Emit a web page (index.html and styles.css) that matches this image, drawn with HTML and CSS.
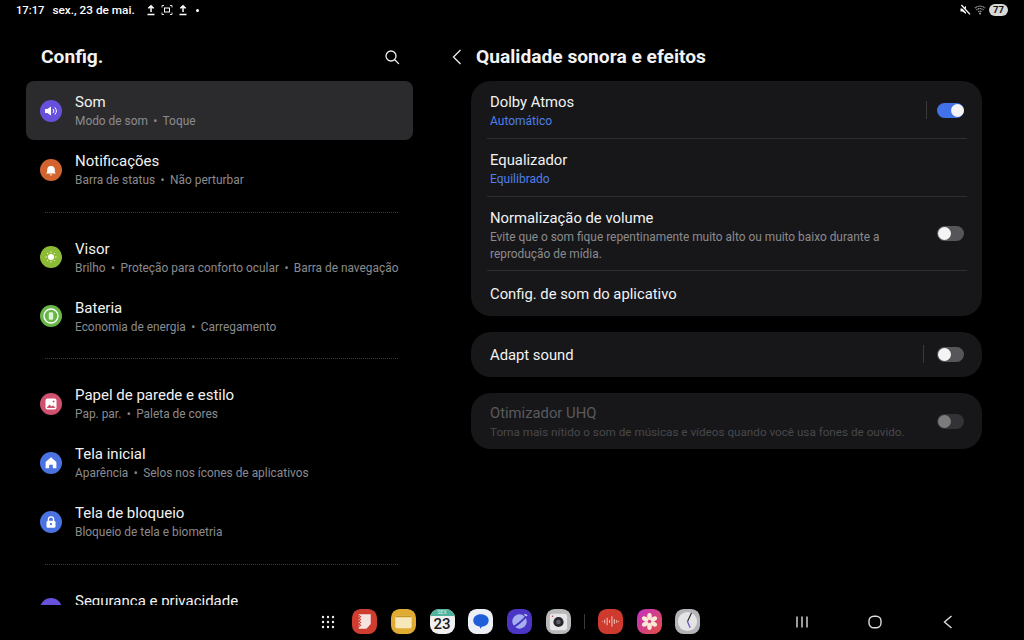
FILE: index.html
```html
<!DOCTYPE html>
<html lang="pt-BR">
  <head>
    <title>Config.</title>
    <meta charset="utf-8">
    <link rel="stylesheet" href="styles.css">
  </head>
  <body>

  <div class="statusbar">
    <span class="clock">17:17</span>
    <span class="date">sex., 23 de mai.</span>
    <svg class="st-icon first" viewBox="0 0 12 12"><path d="M6 8V2M3.400 4.400 6 1.800l2.600 2.600M2.500 10.600h7" fill="none" stroke="#fff" stroke-width="1.500"/></svg>
    <svg class="st-icon" viewBox="0 0 12 12"><path d="M1 3.500V1.500h2M9 1.500h2v2M11 8.500v2H9M3 10.500H1v-2" fill="none" stroke="#ddd" stroke-width="1"/><rect x="3.500" y="4" width="5" height="4" fill="none" stroke="#fff" stroke-width="1"/></svg>
    <svg class="st-icon" viewBox="0 0 12 12"><path d="M6 8V2M3.400 4.400 6 1.800l2.600 2.600M2.500 10.600h7" fill="none" stroke="#fff" stroke-width="1.500"/></svg>
    <span class="st-dot"></span>
    <span class="st-right">
      <svg class="st-icon" viewBox="0 0 12 12"><path d="M1.500 4.500h2L7 2v8L3.500 7.500h-2z" fill="#fff"/><path d="M2 1.500 10.500 10.500" stroke="#000" stroke-width="2.400"/><path d="M2.400 1 11 10.400" stroke="#fff" stroke-width="1.300"/></svg>
      <svg class="st-icon" viewBox="0 0 12 12"><path d="M.8 4.200a7.500 7.500 0 0 1 10.400 0M2.500 6a5 5 0 0 1 7 0M4.200 7.800a2.600 2.600 0 0 1 3.600 0" fill="none" stroke="#aaa" stroke-width="1.100" stroke-dasharray="1.200 .5"/><circle cx="6" cy="9.600" r="1" fill="#aaa"/></svg>
      <span class="battery">77</span>
    </span>
  </div>

  <div class="main">
    <div class="left">
      <div class="left-head">
        <h1>Config.</h1>
        <svg class="search" viewBox="0 0 16 16"><circle cx="7" cy="7" r="5" fill="none" stroke="#eee" stroke-width="1.300"/><path d="M10.700 10.700 14.600 14.600" stroke="#eee" stroke-width="1.300" stroke-linecap="round"/></svg>
      </div>

      <div class="row active">
        <span class="ico violet"><svg viewBox="0 0 22 22"><path d="M5 9h2.400L11 6.400v9.200L7.400 13H5z" fill="#fff"/><path d="M13 9a3 3 0 0 1 0 4M14.800 7.400a5.400 5.400 0 0 1 0 7.200" fill="none" stroke="#fff" stroke-width="1"/></svg></span>
        <div class="label"><div class="t">Som</div><div class="s">Modo de som <b>•</b> Toque</div></div>
      </div>
      <div class="row">
        <span class="ico orange"><svg viewBox="0 0 22 22"><path d="M6.200 14.400c.9-.9 1-1.800 1-3.600a3.800 3.800 0 0 1 7.600 0c0 1.800.1 2.700 1 3.600z" fill="#fff"/><path d="M9.600 15.600a1.500 1.500 0 0 0 2.800 0z" fill="#fff"/></svg></span>
        <div class="label"><div class="t">Notificações</div><div class="s">Barra de status <b>•</b> Não perturbar</div></div>
      </div>
      <div class="divider"></div>

      <div class="row">
        <span class="ico lime"><svg viewBox="0 0 22 22"><circle cx="11" cy="11" r="3" fill="#fff"/><path d="M11 5.500v1.400M11 15.100v1.400M5.500 11h1.400M15.100 11h1.400M7.100 7.100l1 1M13.900 13.900l1 1M7.100 14.900l1-1M13.900 8.100l1-1" stroke="#fff" stroke-width=".9"/></svg></span>
        <div class="label"><div class="t">Visor</div><div class="s">Brilho <b>•</b> Proteção para conforto ocular <b>•</b> Barra de navegação</div></div>
      </div>
      <div class="row">
        <span class="ico green"><svg viewBox="0 0 22 22"><circle cx="11" cy="11" r="7" fill="none" stroke="#fff" stroke-width="1.300"/><rect x="8.800" y="7.300" width="4.400" height="7.400" rx="1.300" fill="#dff3d5"/></svg></span>
        <div class="label"><div class="t">Bateria</div><div class="s">Economia de energia <b>•</b> Carregamento</div></div>
      </div>
      <div class="divider"></div>

      <div class="row">
        <span class="ico pink"><svg viewBox="0 0 22 22"><rect x="5.500" y="5.500" width="11" height="11" rx="2" fill="#fff"/><path d="M6.500 15l3-3.500 2 2 1.500-1.300 2.500 2.800z" fill="#d0506f"/><circle cx="13.600" cy="8.600" r="1" fill="#d0506f"/></svg></span>
        <div class="label"><div class="t">Papel de parede e estilo</div><div class="s">Pap. par. <b>•</b> Paleta de cores</div></div>
      </div>
      <div class="row">
        <span class="ico blue"><svg viewBox="0 0 22 22"><path d="M11 5.200 16.400 10v6.200h-3.600v-3.400H9.200v3.400H5.600V10z" fill="#fff"/></svg></span>
        <div class="label"><div class="t">Tela inicial</div><div class="s">Aparência <b>•</b> Selos nos ícones de aplicativos</div></div>
      </div>
      <div class="row">
        <span class="ico blue"><svg viewBox="0 0 22 22"><rect x="6.500" y="9.800" width="9" height="7" rx="1.500" fill="#fff"/><path d="M8.400 10V8.400a2.600 2.600 0 0 1 5.200 0V10" fill="none" stroke="#fff" stroke-width="1.300"/><circle cx="11" cy="13.200" r="1.100" fill="#4a72e0"/></svg></span>
        <div class="label"><div class="t">Tela de bloqueio</div><div class="s">Bloqueio de tela e biometria</div></div>
      </div>
      <div class="divider"></div>

      <div class="row">
        <span class="ico indigo"></span>
        <div class="label"><div class="t">Segurança e privacidade</div><div class="s">&nbsp;</div></div>
      </div>
    </div>

    <div class="right">
      <div class="right-head">
        <svg class="back" viewBox="0 0 10 16"><path d="M8.500 1 1.500 8l7 7" fill="none" stroke="#eee" stroke-width="1.300"/></svg>
        <h2>Qualidade sonora e efeitos</h2>
      </div>

      <div class="card">
        <div class="item">
          <div class="txt"><div class="t">Dolby Atmos</div><div class="val">Automático</div></div>
          <span class="vbar"></span>
          <span class="switch on"></span>
        </div>
        <div class="item">
          <div class="txt"><div class="t">Equalizador</div><div class="val">Equilibrado</div></div>
        </div>
        <div class="item multi">
          <div class="txt"><div class="t">Normalização de volume</div><div class="s">Evite que o som fique repentinamente muito alto ou muito baixo durante a reprodução de mídia.</div></div>
          <span class="switch"></span>
        </div>
        <div class="item single">
          <div class="txt"><div class="t">Config. de som do aplicativo</div></div>
        </div>
      </div>

      <div class="card">
        <div class="item single adapt">
          <div class="txt"><div class="t">Adapt sound</div></div>
          <span class="vbar"></span>
          <span class="switch"></span>
        </div>
      </div>

      <div class="card">
        <div class="item off">
          <div class="txt"><div class="t">Otimizador UHQ</div><div class="s">Torna mais nítido o som de músicas e vídeos quando você usa fones de ouvido.</div></div>
          <span class="switch"></span>
        </div>
      </div>
    </div>
  </div>

  <div class="dock">
    <svg class="apps" viewBox="0 0 14 14"><g fill="#eee"><circle cx="2" cy="2" r="1.200"/><circle cx="7" cy="2" r="1.200"/><circle cx="12" cy="2" r="1.200"/><circle cx="2" cy="7" r="1.200"/><circle cx="7" cy="7" r="1.200"/><circle cx="12" cy="7" r="1.200"/><circle cx="2" cy="12" r="1.200"/><circle cx="7" cy="12" r="1.200"/><circle cx="12" cy="12" r="1.200"/></g></svg>

    <svg class="app" viewBox="0 0 26 26"><rect width="26" height="26" rx="9" fill="#cf3d31"/><path d="M7 5.500h12.500v10l-4.500 5H7z" fill="#f4e3df"/><path d="M7 6.500l2 1.500-2 1.500 2 1.500-2 1.500 2 1.500-2 1.500 2 1.500-2 1.500" fill="none" stroke="#cf3d31" stroke-width="1.100"/></svg>
    <svg class="app" viewBox="0 0 26 26"><rect width="26" height="26" rx="9" fill="#e0ab32"/><rect x="4.500" y="7" width="17" height="13" rx="1.500" fill="#f6e8bb"/><path d="M4.500 8.500a1.500 1.500 0 0 1 1.500-1.500h14a1.500 1.500 0 0 1 1.500 1.500z" fill="#c99522"/></svg>
    <span class="app cal"><span class="cal-top">SEX</span><span class="cal-num">23</span></span>
    <svg class="app" viewBox="0 0 26 26"><rect width="26" height="26" rx="9" fill="#ecf0f6"/><path d="M13 5.500c5 0 8.500 2.600 8.500 6.400s-3.500 6.300-7 6.300l-1.600 2.300-1.100-2.500c-3.600-.4-6.300-2.700-6.300-6.100 0-3.800 3.500-6.400 7.500-6.400z" fill="#1f5ed8"/></svg>
    <svg class="app" viewBox="0 0 26 26"><rect width="26" height="26" rx="9" fill="#4a35c4"/><circle cx="13" cy="13" r="7.500" fill="#a6b0f0"/><path d="M5 19.500C9 18 18 11 21 6" fill="none" stroke="#4a35c4" stroke-width="2"/><path d="M18 5.500l3 1.500" stroke="#c6cdf8" stroke-width="1.500"/></svg>
    <svg class="app" viewBox="0 0 26 26"><rect width="26" height="26" rx="9" fill="#b9b9bc"/><rect x="4" y="5" width="18" height="17" rx="3" fill="#e6e6e8"/><circle cx="13" cy="13.500" r="5.300" fill="#26262a"/><circle cx="13" cy="13.500" r="2.400" fill="#5d6068"/><circle cx="6.800" cy="7.500" r=".8" fill="#d0443a"/></svg>
    <span class="dock-sep"></span>
    <svg class="app" viewBox="0 0 26 26"><rect width="26" height="26" rx="9" fill="#cf3a2e"/><path d="M4.500 13v0M7 11.500v3M9.500 9.500v7M12 12v2M14.500 8v10M17 11v4M19.500 12v2M21.500 13v0" stroke="#f5cfc9" stroke-width="1" stroke-linecap="round"/></svg>
    <svg class="app" viewBox="0 0 26 26"><defs><linearGradient id="gal" x1="0" y1="0" x2="1" y2="1"><stop offset="0" stop-color="#c431c8"/><stop offset="1" stop-color="#e2503f"/></linearGradient></defs><rect width="26" height="26" rx="9" fill="url(#gal)"/><g fill="#f9e9d5"><ellipse cx="13" cy="7.800" rx="2.400" ry="3.600"/><ellipse cx="13" cy="18.200" rx="2.400" ry="3.600"/><ellipse cx="13" cy="7.800" rx="2.400" ry="3.600" transform="rotate(60 13 13)"/><ellipse cx="13" cy="7.800" rx="2.400" ry="3.600" transform="rotate(120 13 13)"/><ellipse cx="13" cy="7.800" rx="2.400" ry="3.600" transform="rotate(240 13 13)"/><ellipse cx="13" cy="7.800" rx="2.400" ry="3.600" transform="rotate(300 13 13)"/></g></svg>
    <svg class="app" viewBox="0 0 26 26"><rect width="26" height="26" rx="9" fill="#b4b4b8"/><circle cx="13" cy="13" r="10" fill="#e4e4e6"/><path d="M13 13 17 4.500" stroke="#26262a" stroke-width="1.200" stroke-linecap="round"/><path d="M13 13 15.500 19" stroke="#7c54c8" stroke-width="1.400" stroke-linecap="round"/></svg>

    <div class="nav">
      <svg viewBox="0 0 16 16"><path d="M3 2.500v11M8 2.500v11M13 2.500v11" stroke="#ddd" stroke-width="1.400"/></svg>
      <svg viewBox="0 0 16 16"><rect x="2" y="2.200" width="12" height="11.600" rx="4.800" fill="none" stroke="#ddd" stroke-width="1.400"/></svg>
      <svg viewBox="0 0 16 16"><path d="M11.500 2 4.500 8l7 6" fill="none" stroke="#ddd" stroke-width="1.400"/></svg>
    </div>
  </div>

  </body>
</html>
```

FILE: styles.css
```css
html, body {
  height: 100%;
}
body {
  margin: 0;
  width: 1024px;
  height: 640px;
  overflow: hidden;
  background: #000;
  color: #f2f2f2;
  font-family: "Roboto", "Liberation Sans", sans-serif;
  display: flex;
  flex-direction: column;
}

/* status bar */
.statusbar {
  height: 20px;
  padding: 0 16px 0 16px;
  display: flex;
  align-items: center;
  font-size: 11.8px;
  font-weight: 500;
  color: #fff;
}
.clock {
  margin-right: 8px;
  font-size: 11.2px;
}
.st-icon {
  width: 12px;
  height: 12px;
  margin-right: 4px;
}
.st-icon.first {
  margin-left: 10px;
}
.st-dot {
  width: 3px;
  height: 3px;
  border-radius: 50%;
  background: #fff;
  margin-left: 3px;
}
.st-right {
  margin-left: auto;
  display: flex;
  align-items: center;
}
.st-right .st-icon {
  margin-right: 3px;
}
.battery {
  width: 19px;
  height: 12px;
  border-radius: 6px;
  background: #d8d8d8;
  color: #111;
  font-size: 9.5px;
  font-weight: 700;
  line-height: 12px;
  text-align: center;
}

.main {
  flex: 1;
  min-height: 0;
  overflow: hidden;
  display: flex;
}

/* left list */
.left {
  width: 387px;
  margin-left: 26px;
  flex-shrink: 0;
}
.left-head {
  height: 61px;
  padding: 12px 13px 0 15px;
  box-sizing: border-box;
  display: flex;
  align-items: center;
  justify-content: space-between;
}
h1 {
  margin: 0;
  font-size: 19.2px;
  font-weight: 700;
}
.search {
  width: 16px;
  height: 16px;
}
.row {
  height: 59px;
  padding-left: 14px;
  display: flex;
  align-items: center;
  gap: 13px;
  border-radius: 8px;
  white-space: nowrap;
}
.row.active {
  background: #2b2b2e;
}
.label {
  padding-top: 2px;
}
.t {
  font-size: 15px;
  line-height: 19px;
}
.s {
  margin-top: 1px;
  font-size: 11.9px;
  line-height: 17px;
  color: #8b8b8e;
}
.s b {
  font-weight: 400;
  margin: 0 2.500px;
}
.ico {
  width: 22px;
  height: 22px;
  border-radius: 50%;
  flex-shrink: 0;
}
.ico svg {
  display: block;
  width: 22px;
  height: 22px;
}
.violet { background: #6650dc; }
.orange { background: #d2652f; }
.lime { background: #8cbb35; }
.green { background: #67b647; }
.pink { background: #d0506f; }
.blue { background: #4a72e0; }
.indigo { background: #6650dc; }
.divider {
  margin: 12.500px 15px 15px 19px;
  border-top: 1px dotted #3a3a3c;
}

/* right panel */
.right {
  width: 511px;
  margin-left: 58px;
  flex-shrink: 0;
}
.right-head {
  height: 61px;
  padding: 12px 0 0 0;
  box-sizing: border-box;
  display: flex;
  align-items: center;
}
.back {
  width: 10px;
  height: 16px;
  margin-left: -19px;
  margin-right: 14px;
}
h2 {
  margin: 0;
  font-size: 19.2px;
  font-weight: 700;
}
.card {
  background: #17171a;
  border-radius: 20px;
  margin-bottom: 16px;
  padding: 0 15px 0 19px;
}
.card .t {
  font-size: 14.8px;
}
.item {
  padding: 12px 0 8px 3px;
  margin-left: -3px;
  display: flex;
  align-items: center;
  border-top: 1px solid #2e2e31;
}
.item:first-child {
  border-top: 0;
}
.item.multi {
  padding: 12px 0 7px 3px;
}
.item.single {
  padding: 11px 0 9px 3px;
  min-height: 25px;
}
.txt {
  flex: 1;
  min-width: 0;
}
.val {
  font-size: 12px;
  line-height: 18px;
  color: #4f7fe8;
}
.item .s {
  max-width: 410px;
}
.vbar {
  width: 1px;
  height: 18px;
  background: #39393c;
  margin: 0 10px 3px 0;
}
.adapt .vbar {
  margin-right: 13px;
}
.switch {
  width: 27px;
  height: 15px;
  border-radius: 8px;
  background: #56565a;
  position: relative;
  flex-shrink: 0;
  margin: 0 3px 3px 0;
}
.multi .switch {
  margin-bottom: 6px;
}
.switch::after {
  content: "";
  position: absolute;
  top: 1px;
  left: .500px;
  width: 13px;
  height: 13px;
  border-radius: 50%;
  background: #f4f4f4;
}
.switch.on {
  background: #4272e8;
}
.switch.on::after {
  left: 13.500px;
}
.item.off {
  padding: 11px 0 8px 3px;
}
.item.off .t {
  color: #5a5a5d;
}
.item.off .s {
  color: #48484b;
  max-width: none;
  font-size: 11.700px;
}
.item.off .switch {
  opacity: .45;
}

/* dock */
.dock {
  height: 33px;
  padding: 0 0 2px 321px;
  flex-shrink: 0;
  display: flex;
  align-items: center;
}
.apps {
  width: 14px;
  height: 14px;
  margin-right: 17px;
}
.app {
  width: 25px;
  height: 25px;
  margin-right: 13.800px;
  flex-shrink: 0;
}
.cal {
  border-radius: 9px;
  background: #f0f0f0;
  overflow: hidden;
  display: flex;
  flex-direction: column;
  align-items: center;
}
.cal-top {
  width: 100%;
  height: 7px;
  background: #4fb39e;
  color: #d8f0ea;
  font-size: 5px;
  line-height: 7px;
  text-align: center;
}
.cal-num {
  color: #1b1b1b;
  font-size: 15px;
  font-weight: 500;
  line-height: 17px;
}
.dock-sep {
  width: 1px;
  height: 15px;
  background: #3a3a3c;
  margin: 0 13px 0 -1px;
}
.nav {
  margin-left: 80px;
  display: flex;
  gap: 57px;
}
.nav svg {
  width: 16px;
  height: 16px;
}
```
